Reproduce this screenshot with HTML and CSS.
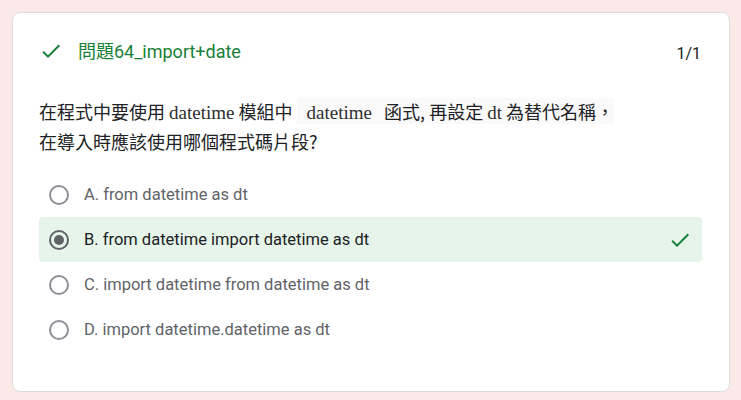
FILE: index.html
```html
<!DOCTYPE html>
<html lang="zh-Hant">
<head>
<meta charset="utf-8">
<link rel="stylesheet" href="styles.css">
</head>
<body>
<div class="card">
  <div class="header">
    <svg class="check" viewBox="0 0 24 24" width="24" height="24"><path d="M9 16.17L4.83 12l-1.42 1.41L9 19 21 7l-1.41-1.41z" fill="#188038"/></svg>
    <span class="title">問題64_import+date</span>
    <span class="score">1/1</span>
  </div>
  <div class="question">
    <div class="qline">在程式中要使用 <span class="code">datetime</span> 模組中 <span class="hl">&nbsp;<span class="code">datetime</span>&nbsp;&nbsp; 函式, 再設定 <span class="code">dt</span> 為替代名稱，</span></div>
    <div class="qline">在導入時應該使用哪個程式碼片段?</div>
  </div>
  <div class="options">
    <div class="option">
      <span class="radio"></span>
      <span class="label">A. from datetime as dt</span>
    </div>
    <div class="option selected">
      <span class="radio checked"></span>
      <span class="label">B. from datetime import datetime as dt</span>
      <svg class="check right" viewBox="0 0 24 24" width="24" height="24"><path d="M9 16.17L4.83 12l-1.42 1.41L9 19 21 7l-1.41-1.41z" fill="#188038"/></svg>
    </div>
    <div class="option">
      <span class="radio"></span>
      <span class="label">C. import datetime from datetime as dt</span>
    </div>
    <div class="option">
      <span class="radio"></span>
      <span class="label">D. import datetime.datetime as dt</span>
    </div>
  </div>
</div>
</body>
</html>
```

FILE: styles.css
```css
html, body {
  margin: 0;
  padding: 0;
}
body {
  background: #fbe9e7;
  padding: 12px 11px 8px 12px;
  font-family: Roboto, "Noto Sans CJK TC", sans-serif;
}
.card {
  box-sizing: border-box;
  width: 718px;
  height: 380px;
  background: #fff;
  border: 1px solid #dadce0;
  border-radius: 8px;
  padding: 26px 27px 0 26px;
}
.header {
  display: flex;
  align-items: center;
  height: 24px;
}
.check {
  display: block;
  flex: none;
}
.title {
  margin-left: 15px;
  font-size: 18px;
  color: #188038;
  flex: 1;
  margin-top: -2px;
}
.score {
  font-size: 16px;
  color: #202124;
  margin-right: 1px;
  margin-top: 4px;
}
.question {
  margin-top: 34px;
  font-family: "Noto Sans CJK TC", sans-serif;
  font-size: 18px;
  line-height: 29px;
  color: #202124;
}
.code {
  font-family: "Liberation Serif", serif;
  font-size: 19px;
  color: #2e2e2e;
}
.hl {
  background: #fafafa;
  padding-left: 6px;
}
.options {
  margin-top: 16px;
}
.option {
  display: flex;
  align-items: center;
  height: 45px;
  padding: 0 10px;
  border-radius: 4px;
  font-size: 16.5px;
  color: #5f6368;
}
.option.selected {
  background: #e6f4ea;
  color: #202124;
}
.radio {
  box-sizing: border-box;
  width: 20px;
  height: 20px;
  border: 2px solid #8c9096;
  border-radius: 50%;
  flex: none;
  display: flex;
  align-items: center;
  justify-content: center;
}
.radio.checked {
  border-color: #5f6368;
}
.radio.checked::after {
  content: "";
  width: 10px;
  height: 10px;
  border-radius: 50%;
  background: #5f6368;
}
.label {
  margin-left: 15px;
  flex: 1;
}
```
